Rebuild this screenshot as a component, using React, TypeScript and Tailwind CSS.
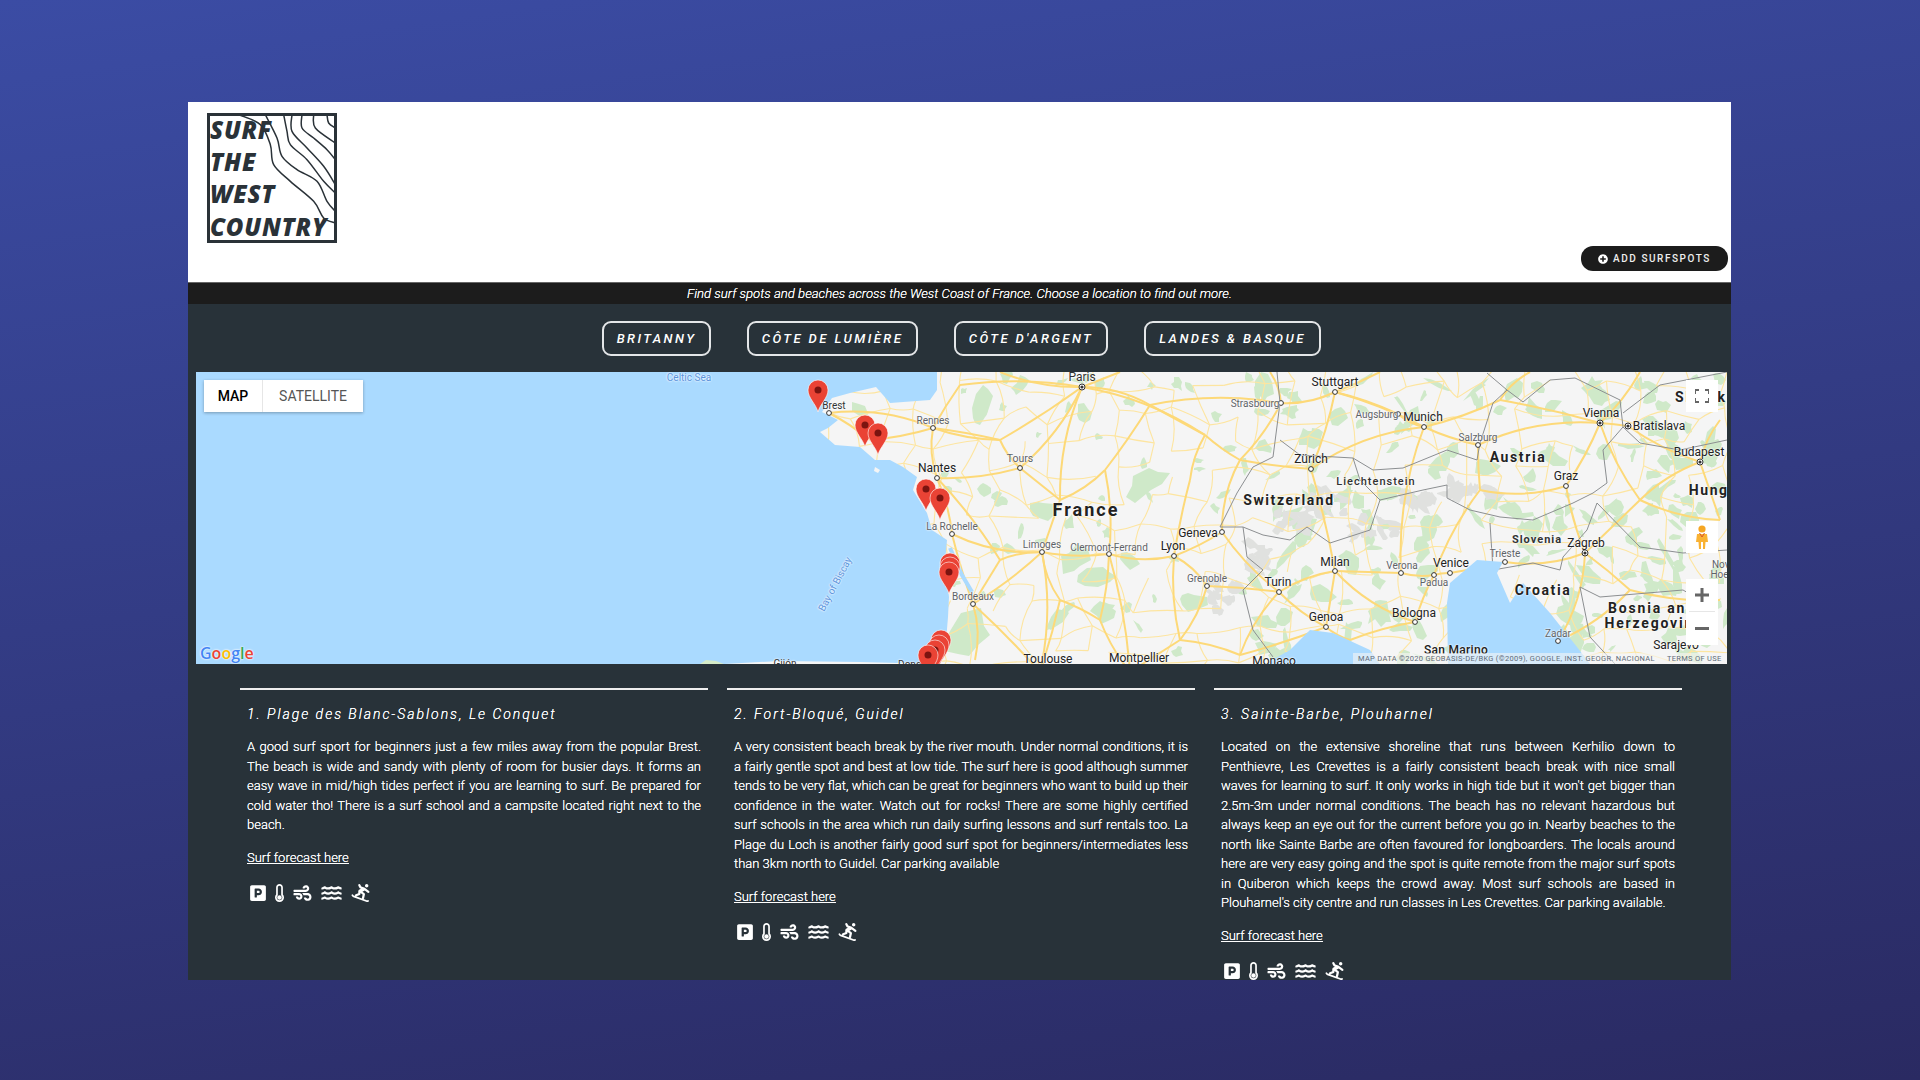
import React from "react";
import { FaParking, FaThermometerEmpty, FaWind, FaWater, FaSnowboarding, FaPlusCircle } from "react-icons/fa";

type P = [number, number];
const smooth = (pts: P[]) => {
  let d = `M${pts[0][0]} ${pts[0][1]}`;
  for (let i = 0; i < pts.length - 1; i++) {
    const p0 = pts[Math.max(i - 1, 0)], p1 = pts[i], p2 = pts[i + 1], p3 = pts[Math.min(i + 2, pts.length - 1)];
    d += ` C${p1[0] + (p2[0] - p0[0]) / 6} ${p1[1] + (p2[1] - p0[1]) / 6} ${p2[0] - (p3[0] - p1[0]) / 6} ${p2[1] - (p3[1] - p1[1]) / 6} ${p2[0]} ${p2[1]}`;
  }
  return d;
};
const poly = (pts: P[]) => pts.map((p) => p.join(",")).join(" ");

const wavesZoom: P[][] = [
  [[175, 60], [240, 90], [270, 150], [280, 210], [330, 260], [400, 320], [430, 370], [465, 385]],
  [[255, 60], [290, 130], [305, 185], [350, 225], [410, 260], [440, 320], [465, 350]],
  [[310, 60], [320, 110], [330, 150], [380, 195], [430, 260], [465, 295]],
  [[335, 60], [335, 110], [380, 160], [430, 215], [465, 270]],
  [[365, 60], [365, 100], [400, 130], [440, 165], [465, 195]],
  [[400, 60], [405, 100], [465, 145]],
  [[440, 60], [445, 85], [465, 100]],
];

function Logo() {
  return (
    <div className="relative w-[130px] h-[130px] border-[3px] border-[#2a3238] overflow-hidden font-['Open_Sans',sans-serif] italic font-extrabold text-[#2a3238] text-[24px] leading-[32px] tracking-[0.75px]">
      <svg className="absolute left-0 top-0" width="124" height="124" viewBox="0 0 124 124" fill="none">
        {wavesZoom.map((w, i) => (
          <path key={i} d={smooth(w.map(([x, y]) => [(x - 80) / 3 - 3, (y - 55) / 3 - 3] as P))} stroke="#2a3238" strokeWidth="1.5" />
        ))}
      </svg>
      <div className="relative mt-[-2px]">SURF</div>
      <div className="relative">THE</div>
      <div className="relative">WEST</div>
      <div className="relative whitespace-nowrap mt-[1px]">COUNTRY</div>
    </div>
  );
}

const C: Record<string, P> = {
  paris: [1082, 387], rennes: [933, 428], nantes: [937, 478], tours: [1020, 468], rochelle: [952, 534], bordeaux: [973, 604],
  limoges: [1042, 552], clermont: [1109, 554], lyon: [1174, 556], geneva: [1222, 532], grenoble: [1207, 586], toulouse: [1040, 672], montp: [1130, 672],
  strasbourg: [1281, 403], stuttgart: [1335, 392], zurich: [1311, 469], munich: [1424, 427], salzburg: [1478, 445], vienna: [1600, 423], bratislava: [1628, 426],
  budapest: [1700, 462], graz: [1566, 486], zagreb: [1585, 553], trieste: [1505, 562], venice: [1450, 573], padua: [1434, 575], verona: [1401, 573], milan: [1335, 571],
  turin: [1279, 592], genoa: [1326, 627], bologna: [1415, 622], zadar: [1558, 641], augsburg: [1398, 414], brest: [829, 413], lorient: [870, 440],
  a: [1150, 405], b: [1205, 435], c: [1105, 470], d: [1060, 500], e: [1000, 440], f: [960, 385], g: [1190, 480], h: [1240, 460], i: [1100, 620], j: [1060, 600],
  k: [1000, 560], l: [1260, 400], m: [1720, 420], n: [1720, 520], o: [1640, 500], p: [1500, 400], q: [1530, 372], r: [1180, 640], s: [1240, 655], t: [1350, 640],
  u: [1480, 490], v: [1630, 590], w: [1720, 600], x: [1380, 372], y: [1640, 372], z: [1270, 372], aa: [1000, 664], ab: [975, 660], ac: [1120, 372], ad: [1000, 372],
};
const E: string[] = [
  "paris-a","paris-e","paris-f","paris-ad","paris-ac","paris-d","e-rennes","f-rennes","rennes-nantes","rennes-lorient","lorient-brest","brest-rennes","rennes-e","nantes-tours","tours-e","tours-d","tours-paris",
  "nantes-rochelle","rochelle-bordeaux","rochelle-limoges","nantes-k","bordeaux-limoges","bordeaux-ab","bordeaux-toulouse","limoges-clermont","limoges-toulouse","limoges-d","d-c","c-clermont","c-a","clermont-lyon","clermont-montp",
  "lyon-geneva","lyon-grenoble","lyon-g","lyon-r","g-b","b-a","b-paris","a-l","l-strasbourg","strasbourg-stuttgart","stuttgart-munich","munich-salzburg","salzburg-vienna","vienna-bratislava","bratislava-budapest","budapest-m","budapest-n","budapest-o",
  "strasbourg-h","h-zurich","h-geneva","h-b","zurich-stuttgart","zurich-munich","zurich-milan","geneva-turin","turin-milan","milan-verona","verona-padua","padua-venice","venice-trieste","trieste-zagreb","zagreb-graz","graz-vienna","graz-u","u-salzburg","u-padua",
  "verona-munich","milan-genoa","genoa-t","genoa-turin","turin-grenoble","milan-bologna","bologna-padua","bologna-t","zagreb-zadar","zagreb-v","v-w","v-zadar","zagreb-o","o-n","o-vienna","stuttgart-x","augsburg-munich","stuttgart-augsburg","munich-p","p-q","p-vienna","vienna-y",
  "toulouse-montp","montp-r","r-grenoble","r-s","s-genoa","strasbourg-z","clermont-i","i-j","j-limoges","j-toulouse","i-montp","k-limoges","k-bordeaux","turin-s",
];
const wiggle = (a: P, b: P, k: number): string => {
  const mx = (a[0] + b[0]) / 2, my = (a[1] + b[1]) / 2;
  const dx = b[0] - a[0], dy = b[1] - a[1];
  const s = ((k * 37) % 11 - 5) / 38;
  return `M${a[0]} ${a[1]} Q${mx - dy * s} ${my + dx * s} ${b[0]} ${b[1]}`;
};

function rng(seed: number) {
  let x = seed;
  return () => {
    x = (x * 1664525 + 1013904223) % 4294967296;
    return x / 4294967296;
  };
}
const minor: string[] = [];
const greenBlobs: string[] = [];
const grayBlobs: string[] = [];
const blob = (rnd: () => number, x: number, y: number, rx: number, ry: number) => {
  const n = 9;
  const pts: P[] = [];
  const rot = rnd() * Math.PI;
  for (let i = 0; i < n; i++) {
    const a = (i / n) * Math.PI * 2;
    const k = 0.55 + rnd() * 0.75;
    const px = Math.cos(a) * rx * k, py = Math.sin(a) * ry * k;
    pts.push([Math.round(x + px * Math.cos(rot) - py * Math.sin(rot)), Math.round(y + px * Math.sin(rot) + py * Math.cos(rot))]);
  }
  return poly(pts);
};
const bigGreens: [number, number, number, number][] = [
  [1147, 483, 12, 24], [1073, 560, 15, 14], [1097, 577, 10, 22], [1103, 613, 13, 10], [1040, 510, 12, 11], [980, 407, 22, 8], [1083, 413, 9, 8],
  [1058, 617, 6, 15], [970, 637, 20, 27], [1190, 600, 10, 15], [1130, 560, 8, 10], [1020, 385, 12, 7], [860, 410, 9, 5], [985, 490, 9, 7],
];
const grays: [number, number, number, number][] = [
  [1467, 487, 30, 10], [1323, 503, 26, 14], [1373, 530, 24, 13], [1223, 597, 14, 18], [1257, 557, 12, 16], [1290, 520, 18, 12], [1420, 500, 16, 7],
];
(() => {
  const rnd = rng(17);
  const stepX = 29, stepY = 27;
  const nx = 32, ny = 13;
  const grid: P[][] = [];
  for (let i = 0; i < nx; i++) {
    const col: P[] = [];
    for (let j = 0; j < ny; j++) col.push([825 + i * stepX + rnd() * 22 - 11, 362 + j * stepY + rnd() * 18 - 9]);
    grid.push(col);
  }
  for (let i = 0; i < nx; i++)
    for (let j = 0; j < ny; j++) {
      if (i < nx - 1 && rnd() > 0.28) minor.push(wiggle(grid[i][j], grid[i + 1][j], i * 7 + j));
      if (j < ny - 1 && rnd() > 0.28) minor.push(wiggle(grid[i][j], grid[i][j + 1], i + j * 5));
    }
  bigGreens.forEach(([x, y, rx, ry]) => greenBlobs.push(blob(rnd, x, y, rx, ry)));
  for (let i = 0; i < 420; i++) {
    const x = 930 + rnd() * 797, y = 372 + rnd() * 292;
    const east = x > 1250;
    if (!east && rnd() > 0.35) continue;
    greenBlobs.push(blob(rnd, x, y, 3 + rnd() * (east ? 13 : 6), 2 + rnd() * (east ? 7 : 4)));
  }
  grays.forEach(([x, y, rx, ry]) => {
    for (let k = 0; k < 14; k++) grayBlobs.push(blob(rnd, x + (rnd() - 0.5) * rx * 1.8, y + (rnd() - 0.5) * ry * 1.8, 3 + rnd() * 7, 2 + rnd() * 5));
  });
})();

const borders: P[][] = [
  [[1277, 372], [1280, 403], [1273, 457], [1253, 467], [1237, 493], [1220, 527], [1243, 527], [1247, 557], [1263, 570], [1243, 590], [1253, 630], [1273, 657]],
  [[1280, 440], [1300, 455], [1353, 458], [1373, 470], [1403, 468], [1447, 450], [1477, 460], [1480, 443], [1493, 403], [1507, 390], [1487, 373]],
  [[1507, 390], [1523, 402], [1550, 380], [1575, 378], [1620, 400], [1623, 427], [1603, 450], [1607, 483], [1593, 493], [1573, 503], [1533, 520], [1500, 517], [1470, 510], [1447, 498], [1447, 485], [1423, 490], [1380, 500], [1370, 530], [1330, 543], [1307, 527], [1290, 540], [1263, 535], [1243, 527]],
  [[1353, 458], [1360, 480], [1380, 500]],
  [[1597, 503], [1640, 547], [1683, 553], [1727, 550]],
  [[1490, 523], [1493, 570], [1533, 563], [1560, 570], [1563, 557], [1587, 530], [1597, 503]],
  [[1580, 587], [1600, 597], [1683, 590], [1700, 600], [1712, 640]],
  [[1580, 587], [1590, 637], [1615, 664]],
  [[1623, 413], [1660, 385], [1727, 372]],
  [[1623, 427], [1640, 443], [1680, 450], [1727, 440]],
];
const atlantic: P[] = [
  [196, 372], [937, 372], [937, 390], [930, 400], [890, 403], [876, 387], [850, 393], [832, 398], [822, 412], [838, 420], [828, 428], [820, 432], [835, 445], [860, 447], [875, 460], [890, 460], [903, 467], [917, 477],
  [913, 490], [927, 513], [932, 530], [947, 540], [945, 563], [949, 597], [948, 617], [945, 653], [940, 664], [196, 664],
];
const med: P[] = [[1265, 664], [1290, 650], [1310, 630], [1333, 633], [1370, 650], [1380, 664]];
const adriatic: P[] = [[1448, 664], [1447, 603], [1450, 583], [1477, 560], [1503, 562], [1497, 573], [1510, 603], [1523, 583], [1550, 613], [1577, 647], [1590, 664]];

const cities: string[] = [
  "brest", "rennes", "nantes", "tours", "rochelle", "bordeaux", "limoges", "clermont", "lyon", "geneva", "grenoble", "strasbourg", "stuttgart", "zurich", "munich", "salzburg",
  "graz", "trieste", "venice", "padua", "verona", "milan", "turin", "genoa", "bologna", "zadar", "augsburg",
];
const capitals = ["paris", "vienna", "bratislava", "budapest", "zagreb"];

type L = [string, number, number, number, number?, number?, string?, number?];
const labels: L[] = [
  ["Paris", 1082, 377, 12, 400, 0, "#333"], ["Rennes", 933, 420, 10], ["Strasbourg", 1255, 403, 10], ["Tours", 1020, 459, 10.5], ["Nantes", 937, 468, 12, 400, 0, "#222"], ["Brest", 834, 405, 10, 400, 0, "#333"],
  ["France", 1086, 509, 18, 700, 2, "#222"], ["Switzerland", 1289, 500, 14, 700, 1.6, "#222"], ["La Rochelle", 952, 526, 10], ["Limoges", 1042, 544, 10], ["Clermont-Ferrand", 1109, 547, 10],
  ["Geneva", 1198, 533, 12, 400, 0, "#222"], ["Lyon", 1173, 546, 12, 400, 0, "#222"], ["Grenoble", 1207, 578, 10], ["Turin", 1278, 582, 12, 400, 0, "#222"], ["Bordeaux", 973, 596, 10],
  ["Toulouse", 1048, 659, 12, 400, 0, "#222"], ["Montpellier", 1139, 658, 12, 400, 0, "#222"], ["Monaco", 1274, 661, 12, 400, 0, "#222"], ["Stuttgart", 1335, 382, 12, 400, 0, "#222"], ["Augsburg", 1377, 414, 10],
  ["Munich", 1423, 417, 12, 400, 0, "#222"], ["Vienna", 1601, 413, 12, 400, 0, "#222"], ["Bratislava", 1659, 426, 12, 400, 0, "#222"], ["Salzburg", 1478, 437, 10], ["Budapest", 1699, 452, 12, 400, 0, "#222"],
  ["Zürich", 1311, 459, 12, 400, 0, "#222"], ["Austria", 1518, 457, 14, 700, 1.6, "#222"], ["Liechtenstein", 1376, 482, 11, 500, 1, "#333"], ["Graz", 1566, 476, 12, 400, 0, "#222"], ["Hungary", 1721, 490, 14, 700, 1.6, "#222"],
  ["Slovenia", 1537, 540, 11, 700, 1, "#333"], ["Zagreb", 1586, 543, 12, 400, 0, "#222"], ["Trieste", 1505, 553, 10], ["Milan", 1335, 562, 12, 400, 0, "#222"], ["Verona", 1402, 565, 10],
  ["Venice", 1451, 563, 12, 400, 0, "#222"], ["Padua", 1434, 582, 10], ["Croatia", 1543, 590, 14, 700, 1.6, "#222"], ["Bosnia and", 1652, 608, 14, 700, 1.8, "#222"], ["Herzegovina", 1654, 623, 14, 700, 1.8, "#222"],
  ["Bologna", 1414, 613, 12, 400, 0, "#222"], ["Genoa", 1326, 617, 12, 400, 0, "#222"], ["Zadar", 1558, 633, 10], ["Sarajevo", 1676, 645, 12, 400, 0, "#222"], ["San Marino", 1456, 650, 12, 500, 0.3, "#222"],
  ["Novi", 1722, 564, 10], ["Hoek", 1722, 574, 10], ["Slovakia", 1708, 397, 14, 700, 1.6, "#222"], ["Celtic Sea", 689, 377, 10, 400, 0, "#5c94dc"], ["Gijón", 785, 663, 10, 400, 0, "#333"], ["Donostia", 918, 664, 10, 400, 0, "#333"],
  ["Bay of Biscay", 835, 584, 10, 400, 0, "#5c94dc", -62],
];

const pins: P[] = [[818, 390], [865, 425], [878, 433], [926, 489], [940, 498], [950, 563], [950, 567], [949, 572], [941, 640], [939, 645], [935, 650], [928, 655]];

function MapCanvas() {
  return (
    <div className="relative ml-2 w-[1531px] h-[292px] overflow-hidden bg-[#f5f5f5] font-['Roboto',sans-serif]">
      <svg className="absolute left-0 top-0" width="1531" height="292" viewBox="196 372 1531 292" fill="none">
        {greenBlobs.map((b, i) => <polygon key={i} points={b} fill="#cfe9c9" />)}
        {grayBlobs.map((b, i) => <polygon key={i} points={b} fill="#e0e1df" />)}
        {minor.map((d, i) => <path key={i} d={d} stroke="#fde5a0" strokeWidth="1.1" />)}
        {E.map((e, i) => {
          const [a, b] = e.split("-");
          return <path key={i} d={wiggle(C[a], C[b], i)} stroke="#fdd978" strokeWidth="2" />;
        })}
        {borders.map((b, i) => <polyline key={i} points={poly(b)} stroke="#8c8f91" strokeWidth="1" />)}
        <polygon points={poly(atlantic)} fill="#aadaff" />
        <polygon points={poly(med)} fill="#aadaff" />
        <polygon points={poly(adriatic)} fill="#aadaff" />
        <polygon points="875,467 880,470 878,473 874,471" fill="#f5f5f5" />
        <polygon points="700,664 706,660 716,661 724,664" fill="#d6ecc9" />
        <polygon points="724,664 780,661 860,662 938,664" fill="#f5f5f5" />
        <path d="M950 548 L962 575 L972 592" stroke="#aadaff" strokeWidth="4" />
        {cities.map((c) => <circle key={c} cx={C[c][0]} cy={C[c][1]} r="2.4" fill="#fff" stroke="#333" strokeWidth="1" />)}
        {capitals.map((c) => (
          <g key={c}>
            <circle cx={C[c][0]} cy={C[c][1]} r="3" fill="#fff" stroke="#333" strokeWidth="1" />
            <circle cx={C[c][0]} cy={C[c][1]} r="1.6" fill="#333" />
          </g>
        ))}
      </svg>
      {labels.map(([t, x, y, size, weight, ls, color, rot]) => (
        <span
          key={t}
          className="absolute whitespace-nowrap [text-shadow:0_0_2px_#fff,0_0_2px_#fff]"
          style={{
            left: x - 196,
            top: y - 372,
            fontSize: size,
            fontWeight: weight ?? 400,
            letterSpacing: ls ?? 0,
            color: color ?? "#5f6368",
            transform: `translate(-50%,-50%) rotate(${rot ?? 0}deg)`,
          }}
        >
          {t}
        </span>
      ))}
      <svg className="absolute left-0 top-0" width="1531" height="292" viewBox="196 372 1531 292" fill="none">
        {pins.map(([x, y], i) => (
          <g key={i}>
            <path
              d={`M${x} ${y + 22} C${x - 2} ${y + 14} ${x - 10} ${y + 8} ${x - 10} ${y} A10 10 0 1 1 ${x + 10} ${y} C${x + 10} ${y + 8} ${x + 2} ${y + 14} ${x} ${y + 22}Z`}
              fill="#ea4335"
              stroke="#fff"
              strokeOpacity="0.75"
              strokeWidth="0.8"
            />
            <circle cx={x} cy={y} r="3.5" fill="#7b1410" />
          </g>
        ))}
      </svg>
      <div className="absolute left-[8px] top-[8px] h-[32px] flex bg-white shadow-[0_1px_3px_rgba(0,0,0,0.3)] text-[14px] leading-[32px]">
        <div className="w-[59px] text-center font-medium text-black border-r border-[#e6e6e6]">MAP</div>
        <div className="w-[100px] text-center text-[#565656]">SATELLITE</div>
      </div>
      <div className="absolute right-[9px] top-[8px] w-[32px] h-[32px] bg-white flex items-center justify-center">
        <svg width="14" height="14" viewBox="0 0 14 14" fill="none" stroke="#666" strokeWidth="2"><path d="M0 5V1h4M10 1h4v4M14 9v4h-4M4 13H0V9" /></svg>
      </div>
      <div className="absolute right-[9px] top-[149px] w-[32px] h-[32px] bg-white flex items-center justify-center">
        <svg width="14" height="24" viewBox="0 0 14 24">
          <circle cx="7" cy="4" r="3.6" fill="#f5a623" />
          <path d="M2 9h10l1 8h-2.5l-.5 7H8V17H6v7H4l-.5-7H1z" fill="#f9b233" />
          <path d="M4.5 8 7 12l2.500-4" stroke="#d9542b" strokeWidth="1" fill="none" />
        </svg>
      </div>
      <div className="absolute right-[9px] top-[207px] w-[32px] h-[66px] bg-white flex flex-col items-center">
        <div className="h-[33px] w-[26px] flex items-center justify-center border-b border-[#e6e6e6]">
          <svg width="14" height="14" viewBox="0 0 14 14" fill="#666"><path d="M5.5 0h3v5.5H14v3H8.500V14h-3V8.500H0v-3h5.500z" /></svg>
        </div>
        <div className="h-[33px] w-full flex items-center justify-center">
          <svg width="14" height="3" viewBox="0 0 14 3" fill="#666"><path d="M0 0h14v3H0z" /></svg>
        </div>
      </div>
      <div className="absolute right-0 bottom-0 h-[11px] w-[374px] bg-[#f5f5f5]/60 flex items-center pl-[5px] text-[7.5px] leading-[11px] tracking-[0.3px] text-[#5f6b78] whitespace-nowrap">
        <span className="w-[309px]">MAP DATA ©2020 GEOBASIS-DE/BKG (©2009), GOOGLE, INST. GEOGR. NACIONAL</span>
        <span>TERMS OF USE</span>
      </div>
      <div className="absolute left-[4px] bottom-[1px] font-['Open_Sans',sans-serif] text-[16px] leading-[20px] font-semibold [text-shadow:0_0_2px_#fff,0_0_2px_#fff]">
        <span className="text-[#4285f4]">G</span>
        <span className="text-[#ea4335]">o</span>
        <span className="text-[#fbbc05]">o</span>
        <span className="text-[#4285f4]">g</span>
        <span className="text-[#34a853]">l</span>
        <span className="text-[#ea4335]">e</span>
      </div>
    </div>
  );
}

const spots = [
  {
    title: "1. Plage des Blanc-Sablons, Le Conquet",
    body: "A good surf sport for beginners just a few miles away from the popular Brest. The beach is wide and sandy with plenty of room for busier days. It forms an easy wave in mid/high tides perfect if you are learning to surf. Be prepared for cold water tho! There is a surf school and a campsite located right next to the beach.",
  },
  {
    title: "2. Fort-Bloqué, Guidel",
    body: "A very consistent beach break by the river mouth. Under normal conditions, it is a fairly gentle spot and best at low tide. The surf here is good although summer tends to be very flat, which can be great for beginners who want to build up their confidence in the water. Watch out for rocks! There are some highly certified surf schools in the area which run daily surfing lessons and surf rentals too. La Plage du Loch is another fairly good surf spot for beginners/intermediates less than 3km north to Guidel. Car parking available",
  },
  {
    title: "3. Sainte-Barbe, Plouharnel",
    body: "Located on the extensive shoreline that runs between Kerhilio down to Penthievre, Les Crevettes is a fairly consistent beach break with nice small waves for learning to surf. It only works in high tide but it won't get bigger than 2.5m-3m under normal conditions. The beach has no relevant hazardous but always keep an eye out for the current before you go in. Nearby beaches to the north like Sainte Barbe are often favoured for longboarders. The locals around here are very easy going and the spot is quite remote from the major surf spots in Quiberon which keeps the crowd away. Most surf schools are based in Plouharnel's city centre and run classes in Les Crevettes. Car parking available.",
  },
];

export default function App() {
  return (
    <div className="w-full h-[1080px] overflow-hidden pt-[102px] bg-[linear-gradient(172deg,#3b4ca4_0%,#2a2a62_100%)] font-['Roboto',sans-serif]">
      <div className="ml-[188px] w-[1543px]">
        <header className="h-[181px] bg-white pl-[19px] pt-[11px] flex justify-between items-start border-b border-[#666]">
          <Logo />
          <button className="mt-[133px] mr-[3px] w-[147px] h-[25px] rounded-[12px] bg-[#1c1c1c] text-[#eee] text-[10px] font-medium tracking-[1.55px] flex items-center justify-center gap-[5px]">
            <FaPlusCircle className="text-white" size={10} />
            ADD SURFSPOTS
          </button>
        </header>
        <div className="h-[21px] bg-[#1c1c1c] text-center text-[13.15px] leading-[21px] italic font-light text-white [text-shadow:0_0_0.4px_#fff]">
          Find surf spots and beaches across the West Coast of France. Choose a location to find out more.
        </div>
        <nav className="h-[68px] bg-[#283239] flex justify-center gap-[36px] pt-[17px] pl-[4px]">
          {[["BRITANNY", 109], ["CÔTE DE LUMIÈRE", 171], ["CÔTE D'ARGENT", 154], ["LANDES & BASQUE", 177]].map(([t, w]) => (
            <div
              key={t as string}
              className="h-[35px] border-2 border-[#e4e6e8] rounded-[9px] flex items-center justify-center text-[13px] font-medium italic tracking-[2.45px] text-white"
              style={{ width: w as number }}
            >
              {t}
            </div>
          ))}
        </nav>
        <div className="bg-[#283239] h-[608px] overflow-hidden">
          <MapCanvas />
          <div className="flex gap-[19px] pl-[52px] pt-[24px]">
            {spots.map((s) => (
              <section key={s.title} className="w-[468px] border-t-2 border-[#eee] px-[7px] text-white [text-shadow:0_0_0.4px_#fff]">
                <h2 className="mt-[14px] text-[14px] leading-[20px] italic font-light tracking-[1.98px]">{s.title}</h2>
                <p className="mt-[13px] text-[13px] leading-[19.5px] font-light text-justify">{s.body}</p>
                <a className="block mt-[13px] text-[13px] leading-[19.5px] font-light underline">Surf forecast here</a>
                <div className="mt-[17px] pl-[3px] flex items-center gap-[9px] text-white">
                  <FaParking className="w-[16px] h-[18px]" />
                  <FaThermometerEmpty className="w-[9px] h-[18px]" />
                  <FaWind className="w-[19px] h-[18px]" />
                  <FaWater className="w-[21px] h-[18px]" />
                  <FaSnowboarding className="w-[19px] h-[18px]" />
                </div>
              </section>
            ))}
          </div>
        </div>
      </div>
    </div>
  );
}
